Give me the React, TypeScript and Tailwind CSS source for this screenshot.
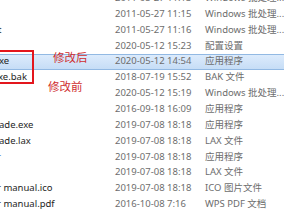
import React from 'react'

type Row = {
  name: string
  nameClass?: string
  date: string
  type: string
  selected?: boolean
}

const rows: Row[] = [
  { name: '', date: '2011-05-27 11:13', type: 'Windows 批处理...' },
  { name: '', date: '2011-05-27 11:15', type: 'Windows 批处理...' },
  { name: 't', nameClass: '-ml-[2px]', date: '2011-05-27 11:16', type: 'Windows 批处理...' },
  { name: '', date: '2020-05-12 15:23', type: '配置设置' },
  { name: 'xe', nameClass: '-ml-[1px]', date: '2020-05-12 14:54', type: '应用程序', selected: true },
  { name: 'xe.bak', nameClass: '-ml-[2px]', date: '2018-07-19 15:52', type: 'BAK 文件' },
  { name: '', date: '2020-05-12 15:19', type: 'Windows 批处理...' },
  { name: '', date: '2016-09-18 16:09', type: '应用程序' },
  { name: 'ade.exe', nameClass: '-ml-[1px]', date: '2019-07-08 18:18', type: '应用程序' },
  { name: 'ade.lax', nameClass: '-ml-[1px]', date: '2019-07-08 18:18', type: 'LAX 文件' },
  { name: 'r', nameClass: '-ml-[3px] text-[#3a78c8]', date: '2019-07-08 18:18', type: '应用程序' },
  { name: '', date: '2019-07-08 18:18', type: 'LAX 文件' },
  { name: 'r manual.ico', nameClass: '-ml-[3px]', date: '2019-07-08 18:18', type: 'ICO 图片文件' },
  { name: 'r manual.pdf', nameClass: '-ml-[3px]', date: '2016-10-08 7:16', type: 'WPS PDF 文档' },
]

export default function App() {
  return (
    <div
      className="relative h-[215px] w-[284px] overflow-hidden bg-white text-[9.5px]"
      style={{ fontFamily: '"Noto Sans", "Noto Sans CJK SC", sans-serif' }}
    >
      <div className="-mt-[9.8px] flex flex-col">
        {rows.map((r, i) => (
          <div
            key={i}
            className={
              r.selected
                ? '-ml-[4px] flex h-[15.86px] items-center border-y border-[#92b9e3] bg-gradient-to-b from-[#dcebfc] to-[#c6ddf6] pl-[4px]'
                : 'flex h-[15.86px] items-center'
            }
          >
            <div className="w-[115px] shrink-0 overflow-hidden whitespace-nowrap text-[#1e1e1e]">
              <span className={r.nameClass}>{r.name}</span>
            </div>
            <div className="w-[90px] shrink-0 whitespace-nowrap text-[#6d6d6d]">{r.date}</div>
            <div className="whitespace-nowrap text-[#6d6d6d]">{r.type}</div>
          </div>
        ))}
      </div>

      {/* red annotation box */}
      <div className="absolute -left-[10px] top-[50px] h-[34px] w-[44px] border-[2.5px] border-[#e3161d]" />
      <div className="absolute left-[53px] top-[50px] text-[11.5px] leading-[16px] text-[#cf2e2e]">修改后</div>
      <div className="absolute left-[48px] top-[79px] text-[11.5px] leading-[16px] text-[#cf2e2e]">修改前</div>
    </div>
  )
}
